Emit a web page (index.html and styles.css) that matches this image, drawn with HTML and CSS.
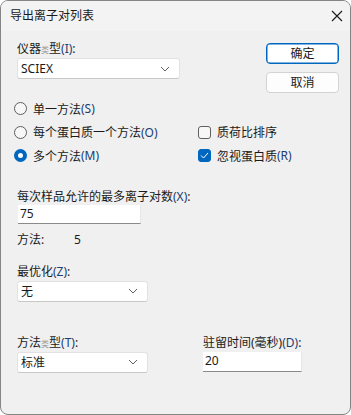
FILE: index.html
```html
<!DOCTYPE html>
<html>

<head>
    <title>导出离子对列表</title>
    <meta name="viewport" content="width=device-width, initial-scale=1">
    <link rel="stylesheet" href="styles.css">
</head>

<body>
    <div class="dialog">
        <div class="titleBar">
            <span class="titleText">导出离子对列表</span>
            <svg class="closeIcon" width="12" height="12" viewBox="0 0 12 12">
                <path d="M1 1 L11 11 M11 1 L1 11" stroke="#1a1a1a" stroke-width="1.1" fill="none" />
            </svg>
        </div>
        <div class="content">
            <div class="topRow">
                <div class="field">
                    <label>仪器<span class="tiny">类</span>型<span class="acc">(I)</span>:</label>
                    <div class="combo wideCombo">
                        <span>SCIEX</span>
                        <svg class="chevron" width="10" height="6" viewBox="0 0 10 6">
                            <path d="M1 1 L5 5 L9 1" stroke="#606060" stroke-width="1" fill="none" />
                        </svg>
                    </div>
                </div>
                <div class="buttons">
                    <button class="btn btnDefault">确定</button>
                    <button class="btn">取消</button>
                </div>
            </div>

            <div class="options">
                <div class="opt"><span class="radio"></span>单一方法<span class="acc">(S)</span></div>
                <div></div>
                <div class="opt"><span class="radio"></span>每个蛋白质一个方法<span class="acc">(O)</span></div>
                <div class="opt"><span class="check"></span>质荷比排序</div>
                <div class="opt"><span class="radio selected"></span>多个方法<span class="acc">(M)</span></div>
                <div class="opt">
                    <span class="check checked">
                        <svg width="9" height="7" viewBox="0 0 9 7">
                            <path d="M1 3.5 L3.5 6 L8 1" stroke="#ffffff" stroke-width="1" fill="none" />
                        </svg>
                    </span>忽视蛋白质<span class="acc">(R)</span>
                </div>
            </div>

            <div class="field maxPairs">
                <label>每次样品允许的最多离子对数<span class="acc">(X)</span>:</label>
                <div class="textBox pairsBox">75</div>
            </div>

            <div class="methodCount">
                <span class="countLabel">方法:</span>
                <span>5</span>
            </div>

            <div class="field optimize">
                <label>最优化<span class="acc">(Z)</span>:</label>
                <div class="combo smallCombo">
                    <span>无</span>
                    <svg class="chevron" width="10" height="6" viewBox="0 0 10 6">
                        <path d="M1 1 L5 5 L9 1" stroke="#606060" stroke-width="1" fill="none" />
                    </svg>
                </div>
            </div>

            <div class="bottomRow">
                <div class="field">
                    <label>方法<span class="tiny">类</span>型<span class="acc">(T)</span>:</label>
                    <div class="combo smallCombo">
                        <span>标准</span>
                        <svg class="chevron" width="10" height="6" viewBox="0 0 10 6">
                            <path d="M1 1 L5 5 L9 1" stroke="#606060" stroke-width="1" fill="none" />
                        </svg>
                    </div>
                </div>
                <div class="field dwell">
                    <label>驻留时间(毫秒)<span class="acc">(D)</span>:</label>
                    <div class="textBox dwellBox">20</div>
                </div>
            </div>
        </div>
    </div>
</body>

</html>
```

FILE: styles.css
```css
* {
    box-sizing: border-box
}

body {
    margin: 0;
    background: #ffffff;
    font-family: "Noto Sans", "Noto Sans CJK SC", sans-serif;
    font-size: 12px;
    color: #1a1a1a;
}

.dialog {
    width: 351px;
    height: 415px;
    border: 1px solid #858585;
    border-radius: 8px;
    background: #f0f0f0;
    overflow: hidden;
}

.titleBar {
    height: 30px;
    background: #f3f3f3;
    display: flex;
    align-items: center;
    justify-content: space-between;
    padding: 0 7px 0 9px;
}

.titleText {
    font-size: 12px;
    line-height: 16px;
}

.content {
    padding: 10px 11px 0 16px;
}

label {
    display: block;
    line-height: 16px;
    height: 16px;
    white-space: nowrap;
}

.acc {
    color: #203c70;
}

.tiny {
    font-size: 8px;
    color: #9a9a9a;
}

.topRow {
    display: flex;
    justify-content: space-between;
}

.combo {
    margin-top: 1px;
    height: 21px;
    background: #ffffff;
    border: 1px solid #e2e2e2;
    border-bottom-color: #c8c8c8;
    border-radius: 3px;
    display: flex;
    align-items: center;
    justify-content: space-between;
    padding: 0 9px 0 3px;
    font-size: 12px;
}

.wideCombo {
    width: 163px;
}

.smallCombo {
    width: 131px;
}

.buttons {
    display: flex;
    flex-direction: column;
    gap: 8px;
    padding-top: 2px;
}

.btn {
    width: 73px;
    height: 21px;
    font-family: inherit;
    font-size: 12px;
    color: #1a1a1a;
    background: #fdfdfd;
    border: 1px solid #d3d3d3;
    border-radius: 4px;
    padding: 0;
    line-height: 16px;
}

.btnDefault {
    border: 1px solid #0067c0;
    box-shadow: inset 0 0 0 0.5px #0067c0;
    background: #ffffff;
}

.options {
    margin-top: 4px;
    display: grid;
    grid-template-columns: 184px auto;
    grid-auto-rows: 23.5px;
    margin-left: -3px;
}

.opt {
    display: flex;
    align-items: center;
    white-space: nowrap;
}

.radio {
    width: 13px;
    height: 13px;
    border: 1px solid #5f5f5f;
    border-radius: 50%;
    background: #f7f7f7;
    margin-right: 6px;
}

.radio.selected {
    border: 4px solid #0067c0;
    background: #ffffff;
}

.check {
    width: 13px;
    height: 13px;
    border: 1px solid #5f5f5f;
    border-radius: 3px;
    background: #f7f7f7;
    margin-right: 6px;
    display: flex;
    align-items: center;
    justify-content: center;
}

.check.checked {
    border-color: #0067c0;
    background: #0067c0;
}

.maxPairs {
    margin-top: 21px;
}

.textBox {
    height: 19px;
    background: #ffffff;
    border-bottom: 1px solid #8a8a8a;
    border-right: 1px solid #e6e6e6;
    padding: 0 2px;
    line-height: 18px;
}

.pairsBox {
    width: 123px;
    margin-left: 1px;
}

.methodCount {
    margin-top: 8px;
    display: flex;
    line-height: 16px;
}

.countLabel {
    width: 57px;
}

.optimize {
    margin-top: 16px;
}

.bottomRow {
    margin-top: 33px;
    display: grid;
    grid-template-columns: 186px auto;
}

.dwellBox {
    width: 99px;
    margin-top: 1px;
    height: 20px;
}
```
